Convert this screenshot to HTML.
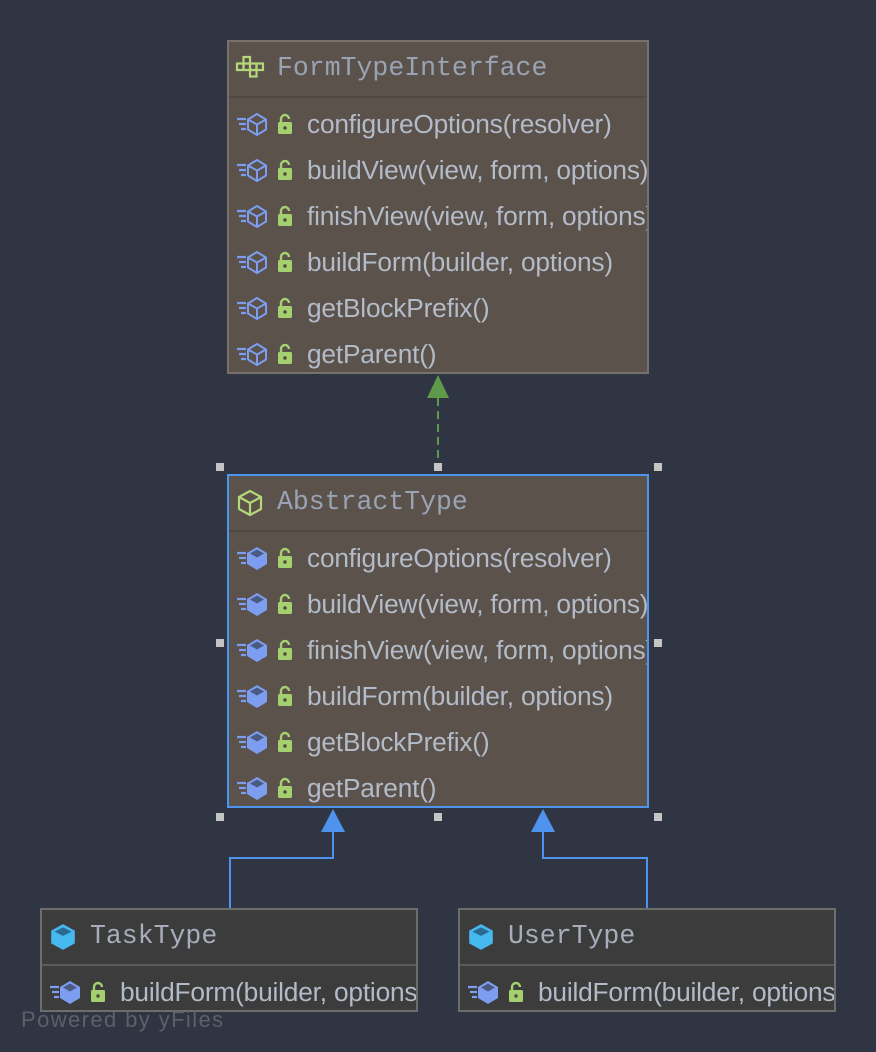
<!DOCTYPE html>
<html><head><meta charset="utf-8"><style>
body{margin:0;width:876px;height:1052px;background:#2f3542;position:relative;overflow:hidden;font-family:"Liberation Sans",sans-serif}
.box{position:absolute;background:#5a524b;border:2px solid #77716b;box-sizing:border-box;overflow:hidden}
.sel{border-color:#4e94ee}
.dark{background:#3c3c3c;border-color:#6d6d6d}
.hdr{position:absolute;left:0;right:0;top:0;height:54px;border-bottom:2px solid #4e4944}
.dark .hdr{border-bottom-color:#5a5a5a}
.title{position:absolute;left:48px;top:11px;font-family:"Liberation Mono",monospace;font-size:26.5px;color:#9aa3b3;white-space:nowrap}
.row{position:absolute;left:0;height:46px;width:700px}
.row svg{position:absolute;left:7px;top:14px}
.row span{position:absolute;left:78px;top:12px;font-size:26.3px;color:#b3bbc9;white-space:nowrap;letter-spacing:-0.2px}
.h{position:absolute;width:8px;height:8px;background:#c4c4c4}
.pw{position:absolute;left:21px;top:1007px;font-size:22px;color:#5c6068;letter-spacing:1.4px}
</style></head><body>

<svg width="876" height="1052" style="position:absolute;left:0;top:0">
<line x1="438" y1="398" x2="438" y2="475" stroke="#5e9a4a" stroke-width="2" stroke-dasharray="8 5"/>
<polygon points="438,375 427,398 449,398" fill="#5e9a4a"/>
<polyline points="230,909 230,858 333,858 333,830" fill="none" stroke="#4e94ee" stroke-width="2"/>
<polygon points="333,809 321,832 345,832" fill="#4e94ee"/>
<polyline points="647,909 647,858 543,858 543,830" fill="none" stroke="#4e94ee" stroke-width="2"/>
<polygon points="543,809 531,832 555,832" fill="#4e94ee"/>
</svg>

<div class="box" style="left:227px;top:40px;width:422px;height:334px">
 <div class="hdr"></div>
 <svg style="position:absolute;left:6px;top:13px" width="32" height="26"><g fill="none" stroke="#b5d77a" stroke-width="2.2"><rect x="8.5" y="2" width="6.5" height="6.5"/><rect x="2" y="8.5" width="6.5" height="6.5"/><rect x="8.5" y="8.5" width="6.5" height="6.5"/><rect x="15" y="8.5" width="6.5" height="6.5"/><rect x="21.5" y="8.5" width="6.5" height="6.5"/><rect x="15" y="15" width="6.5" height="6.5"/></g></svg>
 <div class="title">FormTypeInterface</div>
</div>
<div class="box sel" style="left:227px;top:474px;width:422px;height:334px">
 <div class="hdr"></div>
 <svg style="position:absolute;left:8px;top:13px" width="26" height="28" viewBox="0 0 26 28"><g fill="none" stroke="#b5d77a" stroke-width="2.2" stroke-linejoin="round"><path d="M13 2L24 8V20L13 26L2 20V8Z"/><path d="M2 8L13 14L24 8M13 14V26"/></g></svg>
 <div class="title">AbstractType</div>
</div>
<div class="box dark" style="left:40px;top:908px;width:378px;height:104px">
 <div class="hdr"></div>
 <svg style="position:absolute;left:7px;top:12px" width="28" height="30" viewBox="0 0 26 28"><path d="M13 2L24 8V20L13 26L2 20V8Z" fill="#45b8f0"/><path d="M5 9L13 13L21 9L13 5Z" fill="#2a6a90"/></svg>
 <div class="title" style="color:#a7aeba">TaskType</div>
</div>
<div class="box dark" style="left:458px;top:908px;width:378px;height:104px">
 <div class="hdr"></div>
 <svg style="position:absolute;left:7px;top:12px" width="28" height="30" viewBox="0 0 26 28"><path d="M13 2L24 8V20L13 26L2 20V8Z" fill="#45b8f0"/><path d="M5 9L13 13L21 9L13 5Z" fill="#2a6a90"/></svg>
 <div class="title" style="color:#a7aeba">UserType</div>
</div>

<div id="rows"></div>
<script>
function row(x,y,t,filled){
 var hex = filled
  ? '<path d="M21 2L31 8V19L21 25L11 19V8Z" fill="#7c9df0"/><path d="M14 8.5L21 12.5L28 8.5L21 4.5Z" fill="#4a5a80"/>'
  : '<g fill="none" stroke="#7c9df0" stroke-width="2" stroke-linejoin="round"><path d="M21 3L30 8.5V18.5L21 24L12 18.5V8.5Z"/><path d="M12 8.5L21 13.5L30 8.5M21 13.5V24"/></g>';
 return '<div class="row" style="left:'+x+'px;top:'+y+'px"><svg width="60" height="28" viewBox="0 0 60 28" style="overflow:visible"><path d="M1 8h9M3 13h7M5 18h5" stroke="#7c9df0" stroke-width="2.2"/>'+hex+'<g transform="translate(41,2)"><path d="M4 9V6a4 4 0 0 1 8 0" fill="none" stroke="#a5d070" stroke-width="2.4"/><rect x="1" y="9" width="14" height="12" rx="1.5" fill="#a5d070"/><circle cx="8" cy="15" r="1.7" fill="#4a4a40"/></g></svg><span>'+t+'</span></div>';
}
var names=["configureOptions(resolver)","buildView(view, form, options)","finishView(view, form, options)","buildForm(builder, options)","getBlockPrefix()","getParent()"];
var h='';
h+='<div style="position:absolute;left:229px;top:97px;width:418px;height:275px;overflow:hidden">';
for(var i=0;i<6;i++)h+=row(0,i*46,names[i],false);
h+='</div>';
h+='<div style="position:absolute;left:229px;top:531px;width:418px;height:275px;overflow:hidden">';
for(var i=0;i<6;i++)h+=row(0,i*46,names[i],true);
h+='</div>';
h+='<div style="position:absolute;left:42px;top:965px;width:374px;height:45px;overflow:hidden">'+row(0,0,"buildForm(builder, options)",true)+'</div>';
h+='<div style="position:absolute;left:460px;top:965px;width:374px;height:45px;overflow:hidden">'+row(0,0,"buildForm(builder, options)",true)+'</div>';
document.getElementById('rows').innerHTML=h;
</script>

<div class="h" style="left:216px;top:463px"></div>
<div class="h" style="left:434px;top:463px"></div>
<div class="h" style="left:654px;top:463px"></div>
<div class="h" style="left:216px;top:639px"></div>
<div class="h" style="left:654px;top:639px"></div>
<div class="h" style="left:216px;top:813px"></div>
<div class="h" style="left:434px;top:813px"></div>
<div class="h" style="left:654px;top:813px"></div>

<div class="pw">Powered by yFiles</div>
</body></html>
